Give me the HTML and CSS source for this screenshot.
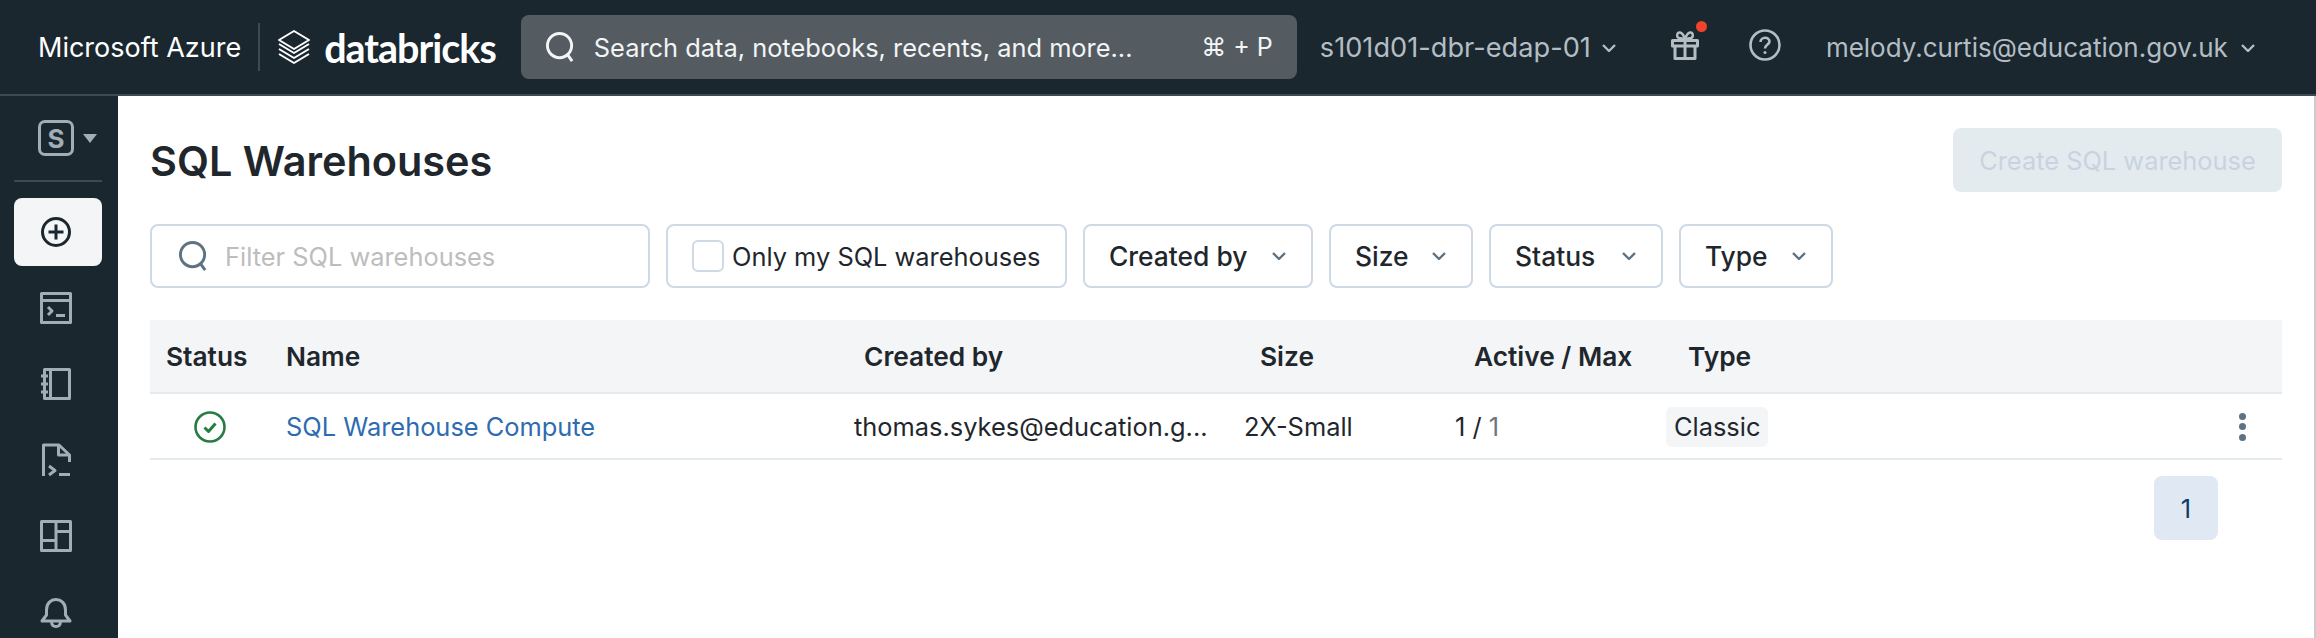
FILE: index.html
```html
<!DOCTYPE html>
<html lang="en">
<head>
  <meta charset="utf-8">
  <title>SQL Warehouses</title>
  <link rel="stylesheet" href="styles.css">
</head>
<body>

<header class="top-bar">
  <span class="cloud-name">Microsoft Azure</span>
  <span class="brand-divider"></span>
  <svg class="brand-icon" viewBox="0 0 34 36" fill="none" stroke="currentColor" stroke-width="2">
    <path d="M17 2 32 11 17 20 2 11Z"/>
    <path d="M2 15 17 24 32 15"/>
    <path d="M2 20 17 29 32 20"/>
    <path d="M2 25 17 34 32 25"/>
  </svg>
  <span class="brand-name">databricks</span>

  <div class="global-search">
    <svg class="search-icon" viewBox="0 0 32 32" fill="none" stroke="currentColor" stroke-width="3">
      <circle cx="15" cy="14" r="12.5"/>
      <path d="M23 23 28 30"/>
    </svg>
    <span class="global-search-text">Search data, notebooks, recents, and more...</span>
    <span class="global-search-key">⌘ + P</span>
  </div>

  <div class="top-link workspace">
    s101d01-dbr-edap-01
    <svg class="chevron" viewBox="0 0 16 10" fill="none" stroke="currentColor" stroke-width="2.4"><path d="M2 2 8 8 14 2"/></svg>
  </div>

  <div class="gift">
    <svg viewBox="0 0 28 30" fill="none" stroke="currentColor" stroke-width="3">
      <path d="M1.5 10.5H26.5V16H1.5Z"/>
      <path d="M4 16V28.5H24V16"/>
      <path d="M14 10.5V28.5"/>
      <path d="M14 9 8 8C5 7 6 2 9 2.500 11 3 13 6 14 9 15 6 17 3 19 2.500 22 2 23 7 20 8Z" stroke-width="2.400"/>
    </svg>
    <span class="gift-dot"></span>
  </div>

  <svg class="help" viewBox="0 0 32 32" fill="none" stroke="currentColor" stroke-width="2.600">
    <circle cx="16" cy="16" r="14.500"/>
    <path d="M11.500 13C11.500 7.500 20.500 7.500 20.500 12.500 20.500 15.500 16 15.500 16 19.500"/>
    <circle cx="16" cy="23.500" r="1.500" fill="currentColor" stroke="none"/>
  </svg>

  <div class="top-link user">
    melody.curtis@education.gov.uk
    <svg class="chevron" viewBox="0 0 16 10" fill="none" stroke="currentColor" stroke-width="2.4"><path d="M2 2 8 8 14 2"/></svg>
  </div>
</header>

<div class="page">
  <nav class="side-nav">
    <div class="persona">
      <span class="persona-badge">S</span>
      <span class="persona-caret"></span>
    </div>
    <div class="side-divider"></div>

    <div class="side-item active">
      <svg viewBox="0 0 32 32" fill="none" stroke="currentColor" stroke-width="3">
        <circle cx="16" cy="16" r="13.500"/>
        <path d="M16 8.500V23.500M8.500 16H23.500"/>
      </svg>
    </div>
    <div class="side-item">
      <svg viewBox="0 0 32 32" fill="none" stroke="currentColor" stroke-width="3">
        <path d="M1.500 1.500H30.500V30.500H1.500Z"/>
        <path d="M1.500 8.500H30.500"/>
        <path d="M8 15 12 19 8 23"/>
        <path d="M16 23.500H25"/>
      </svg>
    </div>
    <div class="side-item">
      <svg viewBox="0 0 32 32" fill="none" stroke="currentColor" stroke-width="3">
        <path d="M4.500 1.500H29.500V30.500H4.500Z"/>
        <path d="M10.500 1.500V30.500"/>
        <path d="M1 8H8M1 16H8M1 24H8"/>
      </svg>
    </div>
    <div class="side-item">
      <svg class="tall" viewBox="0 0 32 34" fill="none" stroke="currentColor" stroke-width="3">
        <path d="M3.500 33V2H19L29.500 12V19"/>
        <path d="M18.500 2V12H29.500"/>
        <path d="M9 23 15 27.500 9 32"/>
        <path d="M19 31.500H30"/>
      </svg>
    </div>
    <div class="side-item">
      <svg viewBox="0 0 32 32" fill="none" stroke="currentColor" stroke-width="3">
        <path d="M1.500 1.500H30.500V30.500H1.500Z"/>
        <path d="M16 1.500V30.500"/>
        <path d="M1.500 20.500H16"/>
        <path d="M16 11.500H30.500"/>
      </svg>
    </div>
    <div class="side-item">
      <svg class="tall" viewBox="0 0 32 34" fill="none" stroke="currentColor" stroke-width="3">
        <path d="M6.500 15C6.500 1 25.500 1 25.500 15V20L30 26H2L6.500 20Z"/>
        <path d="M11.500 27C12 33 20 33 20.500 27"/>
      </svg>
    </div>
  </nav>

  <main class="content">
    <div class="title-row">
      <h1 class="page-title">SQL Warehouses</h1>
      <button class="create-btn">Create SQL warehouse</button>
    </div>

    <div class="filter-row">
      <div class="filter-input">
        <svg class="search-icon" viewBox="0 0 32 32" fill="none" stroke="currentColor" stroke-width="3">
          <circle cx="15" cy="14" r="12.500"/>
          <path d="M23 23 28 30"/>
        </svg>
        <span>Filter SQL warehouses</span>
      </div>
      <label class="filter-check">
        <span class="checkbox"></span>
        Only my SQL warehouses
      </label>
      <div class="filter-select created">Created by <svg class="chevron" viewBox="0 0 16 10" fill="none" stroke="currentColor" stroke-width="2.4"><path d="M2 2 8 8 14 2"/></svg></div>
      <div class="filter-select size">Size <svg class="chevron" viewBox="0 0 16 10" fill="none" stroke="currentColor" stroke-width="2.4"><path d="M2 2 8 8 14 2"/></svg></div>
      <div class="filter-select status">Status <svg class="chevron" viewBox="0 0 16 10" fill="none" stroke="currentColor" stroke-width="2.4"><path d="M2 2 8 8 14 2"/></svg></div>
      <div class="filter-select type">Type <svg class="chevron" viewBox="0 0 16 10" fill="none" stroke="currentColor" stroke-width="2.4"><path d="M2 2 8 8 14 2"/></svg></div>
    </div>

    <div class="table">
      <div class="table-head">
        <div class="head-status">Status</div>
        <div>Name</div>
        <div>Created by</div>
        <div>Size</div>
        <div>Active / Max</div>
        <div>Type</div>
      </div>
      <div class="table-row">
        <div class="cell-status">
          <svg viewBox="0 0 32 32" fill="none" stroke="currentColor" stroke-width="2.600">
            <circle cx="16" cy="16" r="14.500"/>
            <path d="M10.500 16.500 14.500 20.500 21.500 12.500" stroke-width="3"/>
          </svg>
        </div>
        <a class="warehouse-link">SQL Warehouse Compute</a>
        <div>thomas.sykes@education.g...</div>
        <div>2X-Small</div>
        <div>1 / <span class="count-max">1</span></div>
        <div class="cell-type">
          <span class="type-tag">Classic</span>
          <span class="row-menu"><i></i><i></i><i></i></span>
        </div>
      </div>
    </div>

    <div class="pager">
      <span class="page-num">1</span>
    </div>
  </main>
</div>

</body>
</html>
```

FILE: styles.css
```css
* {
  box-sizing: border-box;
}
html, body {
  height: 100%;
}
body {
  margin: 0;
  display: flex;
  flex-direction: column;
  overflow: hidden;
  font-family: Inter, "Liberation Sans", sans-serif;
  font-size: 25.400px;
  color: #1f272d;
  background: #fff;
}
svg {
  stroke-linejoin: round;
}



.top-bar {
  flex: none;
  height: 96px;
  padding-left: 38px;
  display: flex;
  align-items: center;
  color: #b3bdc3;
  background-color: #1a272f;
  border-bottom: 2px solid #3d4a52;
}
.cloud-name {
  padding-top: 1px;
  color: #fff;
  font-size: 27px;
}
.brand-divider {
  width: 2px;
  height: 48px;
  margin: 0 17px;
  background-color: #3d4a52;
}
.brand-icon {
  width: 34px;
  height: 36px;
  color: #fff;
}
.brand-name {
  margin-left: 13px;
  color: #fff;
  font-family: Lato, sans-serif;
  font-size: 39.500px;
  font-weight: 700;
  letter-spacing: -1px;
}
.global-search {
  width: 776px;
  height: 64px;
  margin-left: 25px;
  padding: 0 24px;
  display: flex;
  align-items: center;
  color: #f2f4f5;
  background-color: #545c61;
  border-radius: 8px;
}
.search-icon {
  flex: none;
  width: 31px;
  height: 31px;
}
.global-search-text {
  margin-left: 18px;
}
.global-search-key {
  margin-left: auto;
  font-size: 25px;
}
.top-link {
  padding-top: 1px;
  display: flex;
  align-items: center;
  white-space: nowrap;
}
.workspace {
  margin-left: 23px;
  font-size: 27.200px;
}
.workspace .chevron {
  margin-left: 10px;
}
.user {
  margin-left: 45px;
  font-size: 26px;
}
.user .chevron {
  margin-left: 12px;
}
.chevron {
  flex: none;
  width: 16px;
  height: 10px;
  margin-left: 12px;
}
.gift {
  position: relative;
  width: 28px;
  height: 30px;
  margin-left: 54px;
  margin-top: -4px;
}
.gift svg {
  display: block;
  width: 28px;
  height: 30px;
}
.gift-dot {
  position: absolute;
  top: -9px;
  right: -8px;
  width: 11px;
  height: 11px;
  background-color: #f0432c;
  border-radius: 50%;
}
.help {
  width: 32px;
  height: 32px;
  margin-left: 50px;
  margin-top: -4px;
}



.page {
  flex: 1;
  min-height: 0;
  display: flex;
  border-right: 2px solid #ccc;
}
.side-nav {
  flex: none;
  width: 118px;
  padding: 24px 16px 0 14px;
  display: flex;
  flex-direction: column;
  color: #a1aeb5;
  background-color: #1a272f;
}
.persona {
  height: 36px;
  margin-bottom: 24px;
  padding-left: 24px;
  display: flex;
  align-items: center;
}
.persona-badge {
  width: 36px;
  height: 36px;
  display: flex;
  align-items: center;
  justify-content: center;
  font-size: 26px;
  font-weight: 700;
  border: 3px solid #a1aeb5;
  border-radius: 7px;
}
.persona-caret {
  margin-left: 9px;
  border-top: 9px solid #a1aeb5;
  border-left: 7px solid transparent;
  border-right: 7px solid transparent;
}
.side-divider {
  flex: none;
  height: 2px;
  margin-bottom: 16px;
  background-color: #3d4a52;
}
.side-item {
  flex: none;
  height: 68px;
  margin-bottom: 8px;
  padding-right: 4px;
  display: flex;
  align-items: center;
  justify-content: center;
  border-radius: 8px;
}
.side-item svg {
  width: 32px;
  height: 32px;
}
.side-item svg.tall {
  height: 34px;
}
.side-item.active {
  color: #1a272f;
  background-color: #f3f5f7;
}



.content {
  flex: 1;
  min-width: 0;
  padding: 32px 32px 0;
}
.title-row {
  height: 64px;
  display: flex;
  align-items: center;
  justify-content: space-between;
}
.page-title {
  margin: 0;
  padding-top: 2px;
  font-size: 41.400px;
  font-weight: 600;
}
.create-btn {
  width: 329px;
  height: 64px;
  padding: 0;
  color: #c9d3e0;
  font: inherit;
  background-color: #e4ebef;
  border: 0;
  border-radius: 8px;
}
.filter-row {
  height: 64px;
  margin-top: 32px;
  display: flex;
}
.filter-input,
.filter-check,
.filter-select {
  flex: none;
  height: 64px;
  display: flex;
  align-items: center;
  background-color: #fff;
  border: 2px solid #cdd9e5;
  border-radius: 8px;
}
.filter-input {
  width: 500px;
  padding-left: 26px;
}
.filter-input svg {
  color: #5f7281;
}
.filter-input span {
  margin-left: 16px;
  padding-top: 1px;
  color: #bdbdbd;
}
.filter-check {
  width: 401px;
  margin-left: 16px;
  padding-left: 24px;
}
.checkbox {
  width: 32px;
  height: 32px;
  margin-right: 8px;
  border: 2px solid #cdd9e5;
  border-radius: 6px;
}
.filter-select {
  margin-left: 16px;
  padding-left: 24px;
  font-size: 26.400px;
  font-weight: 500;
}
.filter-select .chevron {
  margin-left: auto;
  margin-right: 24px;
  color: #5f7281;
}
.filter-select.created { width: 230px; }
.filter-select.size { width: 144px; }
.filter-select.status { width: 174px; }
.filter-select.type { width: 154px; }



.table {
  margin-top: 32px;
}
.table-head {
  height: 74px;
  display: grid;
  grid-template-columns: 136px 578px 396px 214px 214px 1fr;
  align-items: center;
  font-size: 26.300px;
  font-weight: 600;
  background-color: #f3f5f7;
  border-bottom: 2px solid #e4ebef;
}
.head-status {
  padding-left: 16px;
}
.table-row {
  height: 66px;
  padding-top: 1px;
  display: grid;
  grid-template-columns: 136px 568px 390px 211px 211px 1fr;
  align-items: center;
  border-bottom: 2px solid #e4ebef;
}
.cell-status {
  width: 120px;
  display: flex;
  justify-content: center;
  color: #277c43;
}
.cell-status svg {
  display: block;
  width: 32px;
  height: 32px;
}
.warehouse-link {
  color: #2e6bb0;
}
.count-max {
  color: #6b7780;
}
.cell-type {
  display: flex;
  align-items: center;
  justify-content: space-between;
  padding-right: 36px;
}
.type-tag {
  height: 40px;
  padding: 0 8px;
  display: flex;
  align-items: center;
  background-color: #f3f5f7;
  border-radius: 6px;
}
.row-menu {
  display: flex;
  flex-direction: column;
  gap: 3.500px;
}
.row-menu i {
  width: 7px;
  height: 7px;
  background-color: #5f7281;
  border-radius: 50%;
}
.pager {
  margin-top: 16px;
  padding-right: 64px;
  display: flex;
  justify-content: flex-end;
}
.page-num {
  width: 64px;
  height: 64px;
  display: flex;
  align-items: center;
  justify-content: center;
  color: #0e3a66;
  background-color: #e0e8f3;
  border-radius: 8px;
}
```
